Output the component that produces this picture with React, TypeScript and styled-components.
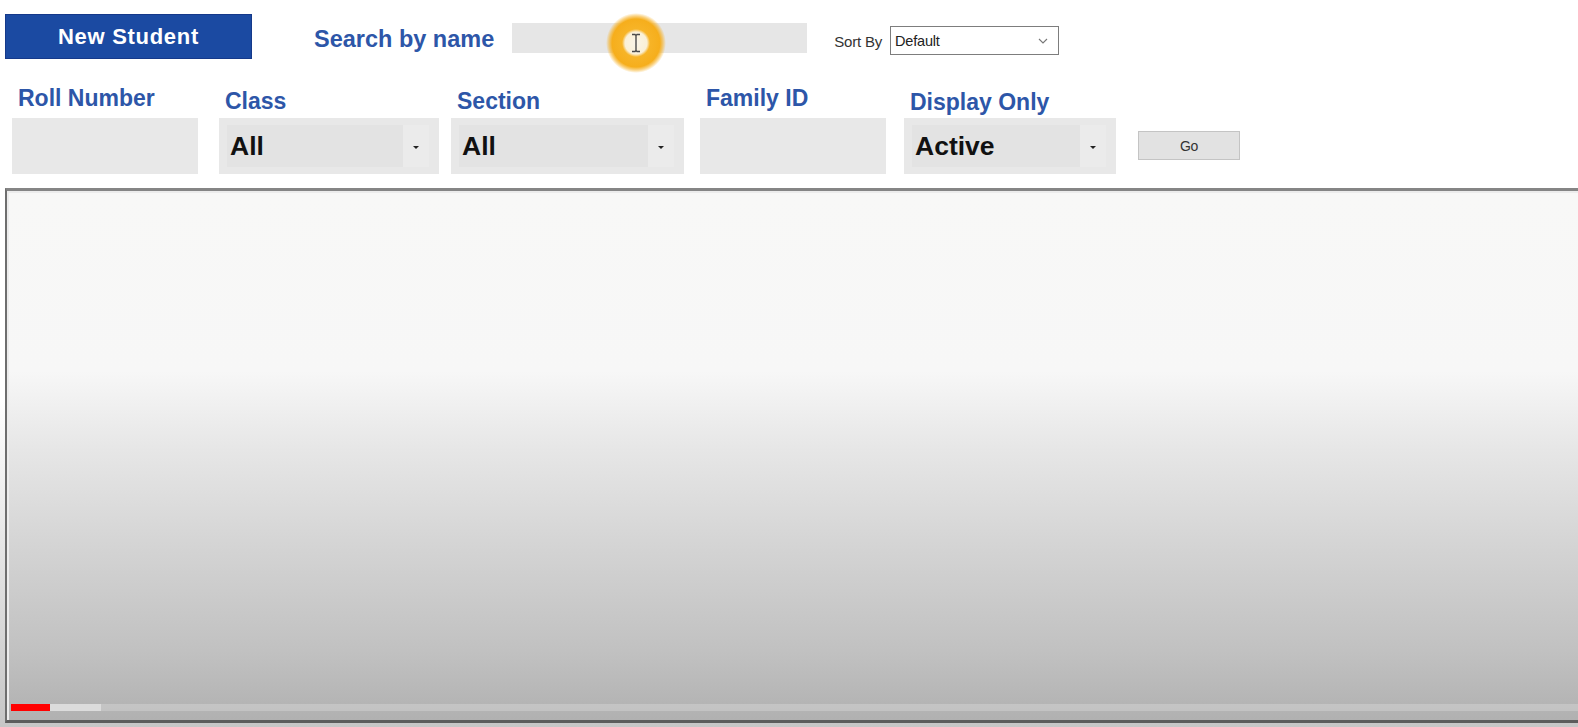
import React from "react";
import styled, { createGlobalStyle } from "styled-components";

const Global = createGlobalStyle`
  html, body { margin: 0; padding: 0; background: #ffffff; }
  body { font-family: "Liberation Sans", Arial, sans-serif; overflow: hidden; }
  * { box-sizing: border-box; }
`;

const Page = styled.div`
  height: 727px;
  display: flex;
  flex-direction: column;
  padding-bottom: 4px;
  background: linear-gradient(to bottom, #ffffff 0, #ffffff 55%, #c6c6c6 100%);
`;

const TopBar = styled.div`
  display: flex;
  align-items: flex-start;
  padding: 14px 0 0 5px;
  height: 59px;
`;

const PrimaryButton = styled.button`
  width: 247px;
  height: 45px;
  background: #1b4aa2;
  border: 1px solid #15398a;
  color: #ffffff;
  font-family: "Liberation Sans", Arial, sans-serif;
  font-weight: 700;
  font-size: 22px;
  letter-spacing: 0.7px;
  padding: 0;
  cursor: pointer;
`;

const SearchLabel = styled.span`
  margin-left: 62px;
  margin-top: 11px;
  font-size: 23.5px;
  line-height: 28px;
  font-weight: 700;
  color: #2d56a8;
`;

const SearchWrap = styled.div`
  position: relative;
  margin-left: 18px;
  margin-top: 9px;
  width: 295px;
  height: 30px;
  background: #e6e6e6;
`;

const Highlight = styled.div`
  position: absolute;
  left: 94px;
  top: -10px;
  width: 60px;
  height: 60px;
  border-radius: 50%;
  background: radial-gradient(
    circle,
    rgba(250, 245, 232, 1) 0,
    rgba(250, 240, 215, 1) 11px,
    #f7b427 14px,
    #f6ae1c 24px,
    rgba(246, 174, 28, 0.55) 27px,
    rgba(246, 174, 28, 0) 30px
  );
  display: flex;
  align-items: center;
  justify-content: center;
`;

const SortLabel = styled.span`
  margin-left: 27px;
  margin-top: 19px;
  font-size: 15px;
  line-height: 17px;
  letter-spacing: -0.2px;
  color: #333333;
`;

const SortSelect = styled.div`
  margin-left: 8px;
  margin-top: 12px;
  width: 169px;
  height: 29px;
  background: #ffffff;
  border: 1px solid #7d7d7d;
  display: flex;
  align-items: center;
  justify-content: space-between;
  padding: 0 10px 0 4px;
  font-size: 14.5px;
  letter-spacing: -0.2px;
  color: #222222;
`;

const FilterRow = styled.div`
  display: flex;
  align-items: flex-start;
  padding-left: 12px;
  margin-top: 25px;
`;

const Field = styled.div<{ $w: number; $ml: number }>`
  width: ${(p) => p.$w}px;
  margin-left: ${(p) => p.$ml}px;
  display: flex;
  flex-direction: column;
`;

const FieldLabel = styled.div<{ $dy: number }>`
  height: 34px;
  padding-top: ${(p) => p.$dy}px;
  padding-left: 6px;
  font-size: 23px;
  line-height: 26px;
  font-weight: 700;
  color: #2d56a8;
  white-space: nowrap;
`;

const TextBox = styled.div`
  height: 56px;
  background: #e8e8e8;
`;

const Combo = styled.div`
  height: 56px;
  background: #e8e8e8;
  padding: 7px 10px 7px 8px;
  display: flex;
`;

const ComboValue = styled.div`
  flex: 1;
  background: #e3e3e3;
  display: flex;
  align-items: center;
  padding-left: 3px;
  font-size: 26.5px;
  font-weight: 700;
  color: #111111;
`;

const ComboArrow = styled.div`
  width: 26px;
  background: #ebebeb;
  display: flex;
  align-items: center;
  justify-content: center;
  &::after {
    content: "";
    width: 0;
    height: 0;
    border-left: 3px solid transparent;
    border-right: 3px solid transparent;
    border-top: 3px solid #222222;
    margin-top: 2px;
  }
`;

const GoButton = styled.button`
  margin-left: 22px;
  margin-top: 47px;
  width: 102px;
  height: 29px;
  background: #e2e2e2;
  border: 1px solid #c4c4c4;
  font-family: "Liberation Sans", Arial, sans-serif;
  font-size: 14px;
  letter-spacing: -0.3px;
  color: #333333;
  padding: 0;
`;

const Panel = styled.div`
  position: relative;
  flex: 1;
  margin: 14px 0 0 5px;
  border-top: 3px solid #858585;
  border-left: 2px solid #6e6e6e;
  border-bottom: 3px solid #5c5c5c;
  box-shadow: inset 2px 2px 0 #ececec;
  background: linear-gradient(
    to bottom,
    #f8f8f7 0,
    #f7f7f7 180px,
    #e6e6e6 260px,
    #d3d3d3 360px,
    #c1c1c1 460px,
    #b1b1b1 528px
  );
`;

const Progress = styled.div`
  position: absolute;
  left: 4px;
  right: 0;
  bottom: 9px;
  height: 7px;
  display: flex;
  background: rgba(255, 255, 255, 0.22);
`;

const Played = styled.div`
  width: 39px;
  background: #ff0000;
`;

const Buffered = styled.div`
  width: 51px;
  background: #dcdcdc;
`;

type FieldDef =
  | { kind: "text"; label: string; w: number; ml: number; dy: number }
  | { kind: "combo"; label: string; w: number; ml: number; dy: number; value: string };

const fields: FieldDef[] = [
  { kind: "text", label: "Roll Number", w: 186, ml: 0, dy: 1 },
  { kind: "combo", label: "Class", w: 220, ml: 21, dy: 4, value: "All" },
  { kind: "combo", label: "Section", w: 233, ml: 12, dy: 4, value: "All" },
  { kind: "text", label: "Family ID", w: 186, ml: 16, dy: 1 },
  { kind: "combo", label: "Display Only", w: 212, ml: 18, dy: 5, value: "Active" },
];

export default function App() {
  return (
    <>
      <Global />
      <Page>
        <TopBar>
          <PrimaryButton>New Student</PrimaryButton>
          <SearchLabel>Search by name</SearchLabel>
          <SearchWrap>
            <Highlight>
              <svg width="10" height="20" viewBox="0 0 10 20">
                <path
                  d="M1 1.5h3l1 1 1-1h3M5 2.5v15M1 18.5h3l1-1 1 1h3"
                  fill="none"
                  stroke="#4a4a4a"
                  strokeWidth="1.4"
                />
              </svg>
            </Highlight>
          </SearchWrap>
          <SortLabel>Sort By</SortLabel>
          <SortSelect>
            <span>Default</span>
            <svg width="10" height="6" viewBox="0 0 10 6">
              <path d="M1 1l4 4 4-4" fill="none" stroke="#777777" strokeWidth="1.1" />
            </svg>
          </SortSelect>
        </TopBar>
        <FilterRow>
          {fields.map((f) => (
            <Field key={f.label} $w={f.w} $ml={f.ml}>
              <FieldLabel $dy={f.dy}>{f.label}</FieldLabel>
              {f.kind === "text" ? (
                <TextBox />
              ) : (
                <Combo>
                  <ComboValue>{f.value}</ComboValue>
                  <ComboArrow />
                </Combo>
              )}
            </Field>
          ))}
          <GoButton>Go</GoButton>
        </FilterRow>
        <Panel>
          <Progress>
            <Played />
            <Buffered />
          </Progress>
        </Panel>
      </Page>
    </>
  );
}
